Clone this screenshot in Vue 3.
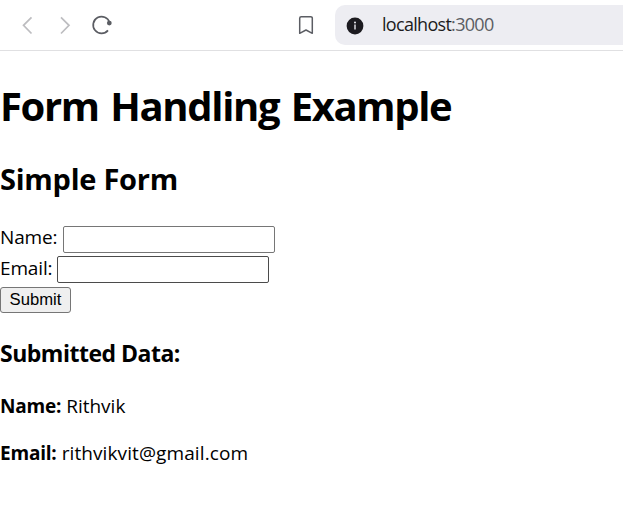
<script setup>
import { ref } from 'vue'

const name = ref('')
const email = ref('')
const submitted = ref({ name: 'Rithvik', email: 'rithvikvit@gmail.com' })

function submit() {
  submitted.value = { name: name.value, email: email.value }
}
</script>

<template>
  <div class="window">
    <header class="toolbar">
      <svg class="nav" width="120" height="50" viewBox="0 0 120 50" fill="none">
        <path d="M31.5 17.3 23.5 25.3l8 8.2" stroke="#bdbdc0" stroke-width="1.7" />
        <path d="M61 17.3l8 8-8 8.2" stroke="#bdbdc0" stroke-width="1.7" />
        <path d="M108 30.4A8.4 8.4 0 1 1 109.6 22.5" stroke="#5b5d63" stroke-width="1.7" />
        <circle cx="109.3" cy="23.1" r="2.4" fill="#5b5d63" />
      </svg>
      <svg class="bookmark" width="16" height="20" viewBox="0 0 16 20" fill="none">
        <path d="M1.7 18.3V3.2a1.5 1.5 0 0 1 1.5-1.5h9.6a1.5 1.5 0 0 1 1.5 1.5V18.3L8 15Z" stroke="#5b5d63" stroke-width="1.5" stroke-linejoin="round" />
      </svg>
      <div class="address">
        <svg width="18" height="18" viewBox="0 0 18 18">
          <circle cx="9" cy="9" r="8.4" fill="#1c1b20" />
          <circle cx="9" cy="5.6" r="1" fill="#ededf2" />
          <path d="M9 7.5v5" stroke="#dcdce0" stroke-width="1.5" />
        </svg>
        <span class="url">localhost<span class="port">:3000</span></span>
      </div>
    </header>
    <main>
      <h1>Form Handling Example</h1>
      <h2>Simple Form</h2>
      <form @submit.prevent="submit">
        <div class="row">
          <label for="name">Name:</label>
          <input id="name" v-model="name" type="text" />
        </div>
        <div class="row email">
          <label for="email">Email:</label>
          <input id="email" v-model="email" type="email" />
        </div>
        <button type="submit">Submit</button>
      </form>
      <h3>Submitted Data:</h3>
      <p class="result-name"><strong>Name:</strong> {{ submitted.name }}</p>
      <p class="result-email"><strong>Email:</strong> {{ submitted.email }}</p>
    </main>
  </div>
</template>

<style>
body {
  margin: 0;
  background: #fff;
}
</style>

<style scoped>
.window {
  height: 507px;
  overflow: hidden;
  color: #000;
  font: 19px/27px "Open Sans", "Noto Sans", sans-serif;
}
.toolbar {
  box-sizing: border-box;
  height: 51px;
  display: flex;
  align-items: flex-start;
  border-bottom: 1px solid #e0e0e2;
}
.nav {
  flex: none;
}
.bookmark {
  flex: none;
  margin: 15px 0 0 178px;
}
.address {
  flex: 1;
  display: flex;
  align-items: center;
  box-sizing: border-box;
  height: 40px;
  margin: 5px 0 0 21px;
  padding-left: 11px;
  border-radius: 10px 0 0 10px;
  background: #ededf2;
}
.address svg {
  margin-top: 2px;
}
.url {
  margin: 0 0 2px 18px;
  font-size: 18px;
  letter-spacing: -0.7px;
  color: #1c1b20;
}
.port {
  color: #5b5d63;
}
h1, h2, h3, p {
  margin: 0;
  white-space: nowrap;
}
h1 {
  margin-top: 28px;
  font-size: 40px;
  line-height: 54px;
  letter-spacing: -1.35px;
  word-spacing: 2.5px;
}
h2 {
  margin-top: 26px;
  font-size: 29px;
  line-height: 40px;
  letter-spacing: -0.25px;
}
form {
  margin-top: 25px;
}
.row {
  display: flex;
  align-items: flex-start;
  height: 31px;
}
label {
  width: 63px;
  white-space: nowrap;
  letter-spacing: -0.15px;
}
.email label {
  width: 57px;
}
input {
  box-sizing: border-box;
  width: 212px;
  height: 27px;
  margin: 2px 0 0;
  padding: 1px 2px;
  border: 1px solid #767676;
  border-radius: 2px;
  background: #fff;
  font: 16.67px "Liberation Sans", Arial, sans-serif;
  outline: none;
}
.email input {
  margin-top: 1px;
  border-color: #4b4b4b;
}
button {
  display: block;
  box-sizing: border-box;
  width: 71px;
  height: 26px;
  margin: 1px 0 0;
  padding: 0;
  border: 1px solid #767676;
  border-radius: 3px;
  background: #efefef;
  color: #000;
  font: 16.67px/22px "Liberation Sans", Arial, sans-serif;
}
h3 {
  margin-top: 24px;
  font-size: 23px;
  line-height: 32px;
  letter-spacing: -0.5px;
}
.result-name {
  margin-top: 24px;
}
.result-email {
  margin-top: 20px;
  letter-spacing: 0.1px;
}
strong {
  letter-spacing: -0.2px;
}
</style>
